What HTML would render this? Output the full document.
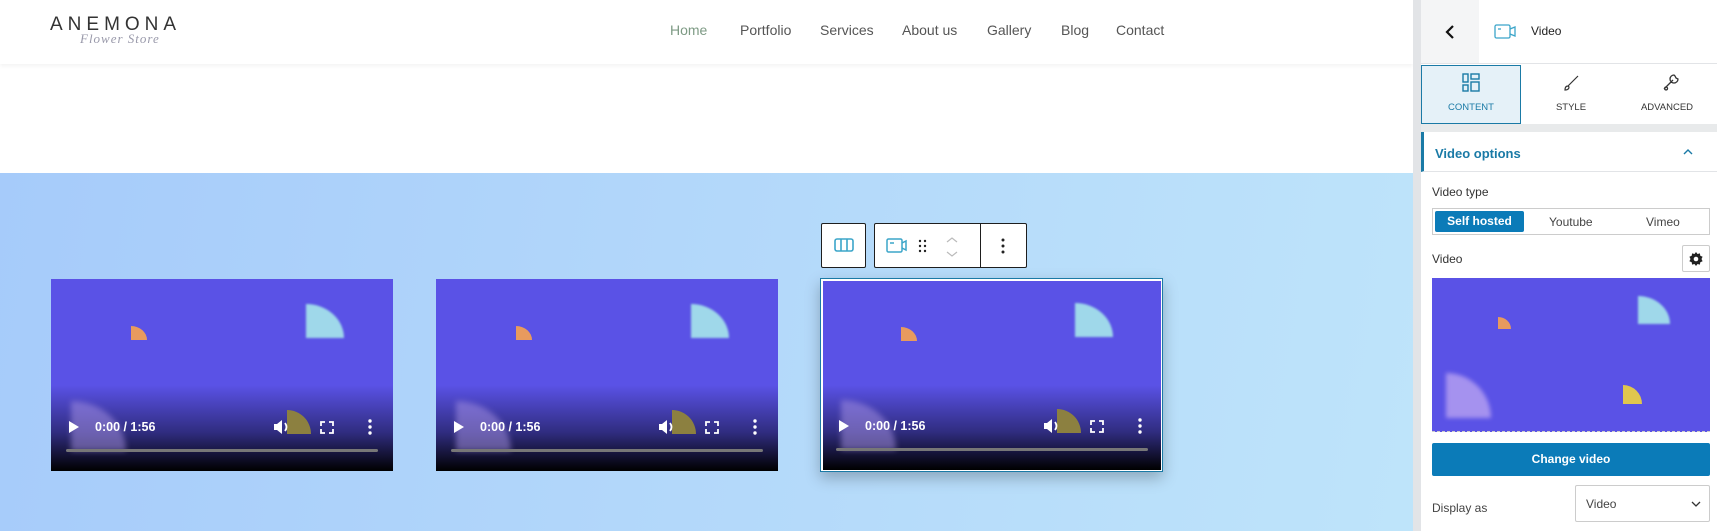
<!DOCTYPE html>
<html><head><meta charset="utf-8"><style>
*{box-sizing:border-box;margin:0;padding:0}
body{width:1717px;height:531px;overflow:hidden;font-family:"Liberation Sans",sans-serif;background:#fff;position:relative}
.abs{position:absolute}
.nav a{position:absolute;top:22px;font-size:14px;color:#555;text-decoration:none}
.vid{position:absolute;background:#5a52e6;overflow:hidden}
.vid .grad{position:absolute;left:0;right:0;bottom:0;height:45%;background:linear-gradient(to bottom,rgba(0,0,0,0),rgba(20,20,60,.6) 55%,#000)}
.vid .t{position:absolute;left:44px;top:140px;color:#fff;font-size:12.5px;font-weight:bold;line-height:16px}
.vid .bar{position:absolute;left:15px;right:15px;bottom:19px;height:3px;background:#777;border-radius:2px}
.shape{position:absolute;border-radius:0 100% 0 0}
.tb{position:absolute;background:#fff;border:1px solid #1e1e1e;border-radius:2px}
.lbl{position:absolute;font-size:12px;color:#333}
</style></head><body>
<svg width="0" height="0" style="position:absolute"><defs>
<symbol id="ctl" viewBox="0 0 320 20">
<path d="M3 4l10 6-10 6z" fill="#fff"/>
<path d="M208 7h3l5-4v14l-5-4h-3z" fill="#fff"/><path d="M219 6q3 4 0 8" fill="none" stroke="#fff" stroke-width="1.8"/>
<path d="M255 9V5h4M263 5h4v4M267 12v4h-4M259 16h-4v-4" fill="none" stroke="#fff" stroke-width="1.8"/>
<circle cx="304" cy="4" r="1.7" fill="#fff"/><circle cx="304" cy="10" r="1.7" fill="#fff"/><circle cx="304" cy="16" r="1.7" fill="#fff"/>
</symbol></defs></svg>
<!-- header -->
<div class="abs" style="left:0;top:0;width:1413px;height:64px;background:#fff;box-shadow:0 2px 4px rgba(0,0,0,.05)"></div>
<div class="abs" style="left:50px;top:14px;font-size:19px;letter-spacing:5px;color:#333">ANEMONA</div>
<div class="abs" style="left:80px;top:31px;font-family:'Liberation Serif',serif;font-style:italic;font-size:13px;color:#99a;letter-spacing:1px">Flower Store</div>
<div class="nav">
<a style="left:670px;color:#7d9a84">Home</a><a style="left:740px">Portfolio</a><a style="left:820px">Services</a><a style="left:902px">About us</a><a style="left:987px">Gallery</a><a style="left:1061px">Blog</a><a style="left:1116px">Contact</a>
</div>
<!-- blue area -->
<div class="abs" style="left:0;top:173px;width:1413px;height:358px;background:linear-gradient(100deg,#a6cbfa,#b3d8fa 50%,#bee4fa)"></div>
<!-- videos -->
<div class="vid" style="left:51px;top:279px;width:342px;height:192px">
 <div class="shape" style="left:80px;top:47px;width:16px;height:14px;background:#e89a5e"></div>
 <div class="shape" style="left:255px;top:25px;width:38px;height:34px;background:#9fd8ea;filter:blur(1px)"></div>
 <div class="grad"></div>
 <div class="shape" style="left:20px;top:122px;width:55px;height:50px;background:rgba(170,150,230,.5);filter:blur(3px)"></div>
 <div class="shape" style="left:236px;top:131px;width:24px;height:24px;background:#8c8040"></div>
 <svg class="abs" style="left:15px;top:138px" width="320" height="20"><use href="#ctl"/></svg>
 <div class="t">0:00 / 1:56</div>
 <div class="bar"></div>
</div>
<div class="vid" style="left:436px;top:279px;width:342px;height:192px">
 <div class="shape" style="left:80px;top:47px;width:16px;height:14px;background:#e89a5e"></div>
 <div class="shape" style="left:255px;top:25px;width:38px;height:34px;background:#9fd8ea;filter:blur(1px)"></div>
 <div class="grad"></div>
 <div class="shape" style="left:20px;top:122px;width:55px;height:50px;background:rgba(170,150,230,.5);filter:blur(3px)"></div>
 <div class="shape" style="left:236px;top:131px;width:24px;height:24px;background:#8c8040"></div>
 <svg class="abs" style="left:15px;top:138px" width="320" height="20"><use href="#ctl"/></svg>
 <div class="t">0:00 / 1:56</div>
 <div class="bar"></div>
</div>
<div class="abs" style="left:820px;top:278px;width:343px;height:194px;border:1px solid #1a7aa6;background:#fff;box-shadow:0 6px 14px rgba(0,0,0,.25)"></div>
<div class="vid" style="left:823px;top:281px;width:338px;height:189px">
 <div class="shape" style="left:78px;top:46px;width:16px;height:14px;background:#e89a5e"></div>
 <div class="shape" style="left:252px;top:22px;width:38px;height:34px;background:#9fd8ea;filter:blur(1px)"></div>
 <div class="grad"></div>
 <div class="shape" style="left:18px;top:119px;width:55px;height:50px;background:rgba(170,150,230,.5);filter:blur(3px)"></div>
 <div class="shape" style="left:234px;top:128px;width:24px;height:24px;background:#8c8040"></div>
 <svg class="abs" style="left:13px;top:135px" width="320" height="20"><use href="#ctl"/></svg>
 <div class="t" style="left:42px;top:137px">0:00 / 1:56</div>
 <div class="bar" style="left:13px;right:13px"></div>
</div>
<!-- toolbar -->
<div class="tb" style="left:821px;top:223px;width:45px;height:45px">
 <svg class="abs" style="left:12px;top:14px" width="20" height="14"><rect x="1" y="1" width="18" height="12" rx="2" fill="none" stroke="#3ba5c9" stroke-width="1.6"/><path d="M7 1v12M13 1v12" stroke="#3ba5c9" stroke-width="1.6"/></svg>
</div>
<div class="tb" style="left:874px;top:223px;width:153px;height:45px">
 <svg class="abs" style="left:11px;top:14px" width="22" height="16"><rect x="1" y="1" width="15" height="13" rx="1.5" fill="none" stroke="#3ba5c9" stroke-width="1.5"/><path d="M16 5l4-2v9l-4-2" fill="none" stroke="#3ba5c9" stroke-width="1.5"/><path d="M4 5h4" stroke="#3ba5c9" stroke-width="1.5"/></svg>
 <svg class="abs" style="left:43px;top:15px" width="10" height="14"><g fill="#222"><circle cx="2" cy="2" r="1.2"/><circle cx="7" cy="2" r="1.2"/><circle cx="2" cy="7" r="1.2"/><circle cx="7" cy="7" r="1.2"/><circle cx="2" cy="12" r="1.2"/><circle cx="7" cy="12" r="1.2"/></g></svg>
 <svg class="abs" style="left:70px;top:12px" width="14" height="22"><path d="M2 6l5-4 5 4M2 16l5 4 5-4" fill="none" stroke="#bbb" stroke-width="1.2"/></svg>
 <div class="abs" style="left:105px;top:0;width:1px;height:43px;background:#1e1e1e"></div>
 <svg class="abs" style="left:126px;top:14px" width="4" height="16"><g fill="#222"><circle cx="2" cy="2" r="1.5"/><circle cx="2" cy="8" r="1.5"/><circle cx="2" cy="14" r="1.5"/></g></svg>
</div>
<!-- sidebar -->
<div class="abs" style="left:1413px;top:0;width:8px;height:531px;background:#e2e4e7"></div>
<div class="abs" style="left:1421px;top:0;width:296px;height:531px;background:#fff"></div>
<div class="abs" style="left:1421px;top:0;width:58px;height:64px;background:#f4f5f6"></div>
<svg class="abs" style="left:1445px;top:24px" width="10" height="16"><path d="M8 2L2 8l6 6" fill="none" stroke="#111" stroke-width="2.2"/></svg>
<svg class="abs" style="left:1494px;top:24px" width="24" height="16"><rect x="1" y="1" width="15" height="13" rx="1.5" fill="none" stroke="#3ba5c9" stroke-width="1.3"/><path d="M16 5l5-2v9l-5-2" fill="none" stroke="#3ba5c9" stroke-width="1.3"/><path d="M4 5h3" stroke="#3ba5c9" stroke-width="1.3"/></svg>
<div class="abs" style="left:1531px;top:24px;font-size:12px;color:#222">Video</div>
<div class="abs" style="left:1421px;top:63px;width:296px;height:1px;background:#e2e4e7"></div>
<div class="abs" style="left:1421px;top:124px;width:296px;height:8px;background:#e8eaeb"></div>
<div class="abs" style="left:1421px;top:65px;width:100px;height:59px;background:#e5f1f8;border:1px solid #1a7aa6"></div>
<svg class="abs" style="left:1462px;top:73px" width="18" height="19"><g fill="none" stroke="#1a7aa6" stroke-width="1.4"><rect x="1" y="1" width="5" height="8"/><rect x="1" y="12" width="5" height="6"/><rect x="9" y="1" width="8" height="5"/><rect x="9" y="9" width="8" height="9"/></g></svg>
<div class="abs" style="left:1421px;top:102px;width:100px;text-align:center;font-size:9.5px;color:#1a7aa6">CONTENT</div>
<svg class="abs" style="left:1562px;top:74px" width="18" height="18"><path d="M16 2L6 12M3 16c0-3 1-4 3-4l1 1c0 2-1 3-4 3z" fill="none" stroke="#333" stroke-width="1.2"/></svg>
<div class="abs" style="left:1521px;top:102px;width:100px;text-align:center;font-size:9.5px;color:#333">STYLE</div>
<svg class="abs" style="left:1661px;top:72px" width="20" height="20"><path d="M3 17l9-9M13 3a4 4 0 1 0 4 4l-2-1-1-2z M5 15a1.5 1.5 0 1 0 0.1 0" fill="none" stroke="#333" stroke-width="1.3"/></svg>
<div class="abs" style="left:1617px;top:102px;width:100px;text-align:center;font-size:9.5px;color:#333">ADVANCED</div>
<div class="abs" style="left:1421px;top:132px;width:296px;height:40px;border-left:3px solid #1a7aa6;border-bottom:1px solid #e2e4e7"></div>
<div class="abs" style="left:1435px;top:146px;font-size:13px;color:#1a7aa6;font-weight:bold">Video options</div>
<svg class="abs" style="left:1683px;top:148px" width="10" height="7"><path d="M1 6l4-4 4 4" fill="none" stroke="#1a7aa6" stroke-width="1.4"/></svg>
<div class="lbl" style="left:1432px;top:185px">Video type</div>
<div class="abs" style="left:1432px;top:208px;width:278px;height:27px;border:1px solid #ccc;background:#fff"></div>
<div class="abs" style="left:1435px;top:211px;width:89px;height:21px;background:#0b7bb8;border-radius:2px;color:#fff;font-size:12px;text-align:center;line-height:21px;font-weight:bold">Self hosted</div>
<div class="lbl" style="left:1549px;top:215px;color:#444">Youtube</div>
<div class="lbl" style="left:1646px;top:215px;color:#444">Vimeo</div>
<div class="lbl" style="left:1432px;top:252px">Video</div>
<div class="abs" style="left:1682px;top:245px;width:28px;height:27px;border:1px solid #ccc;border-radius:2px"></div>
<svg class="abs" style="left:1688px;top:251px" width="16" height="16" viewBox="0 0 16 16"><path d="M8 1l1.5 2 2.4-.6.4 2.4 2.3 1L13.5 8l1.1 2.2-2.3 1-.4 2.4-2.4-.6L8 15l-1.5-2-2.4.6-.4-2.4-2.3-1L2.5 8 1.4 5.8l2.3-1 .4-2.4 2.4.6z" fill="#222"/><circle cx="8" cy="8" r="2.3" fill="#fff"/></svg>
<div class="abs" style="left:1432px;top:278px;width:278px;height:154px;background:#5a52e6;overflow:hidden;border-bottom:1px dashed #ccc">
 <div class="shape" style="left:66px;top:39px;width:13px;height:12px;background:#e89a5e"></div>
 <div class="shape" style="left:206px;top:18px;width:32px;height:28px;background:#9fd8ea;filter:blur(1px)"></div>
 <div class="shape" style="left:14px;top:95px;width:45px;height:45px;background:#a592ef;filter:blur(2px)"></div>
 <div class="shape" style="left:191px;top:107px;width:19px;height:19px;background:#e0c64e"></div>
</div>
<div class="abs" style="left:1432px;top:443px;width:278px;height:33px;background:#0b7bb8;border-radius:2px;color:#fff;font-size:12px;font-weight:bold;text-align:center;line-height:33px">Change video</div>
<div class="lbl" style="left:1432px;top:501px;color:#444">Display as</div>
<div class="abs" style="left:1575px;top:485px;width:135px;height:37px;border:1px solid #ccc;border-radius:2px"></div>
<div class="lbl" style="left:1586px;top:497px;color:#444">Video</div>
<svg class="abs" style="left:1691px;top:501px" width="10" height="7"><path d="M1 1l4 4 4-4" fill="none" stroke="#333" stroke-width="1.3"/></svg>
</body></html>
